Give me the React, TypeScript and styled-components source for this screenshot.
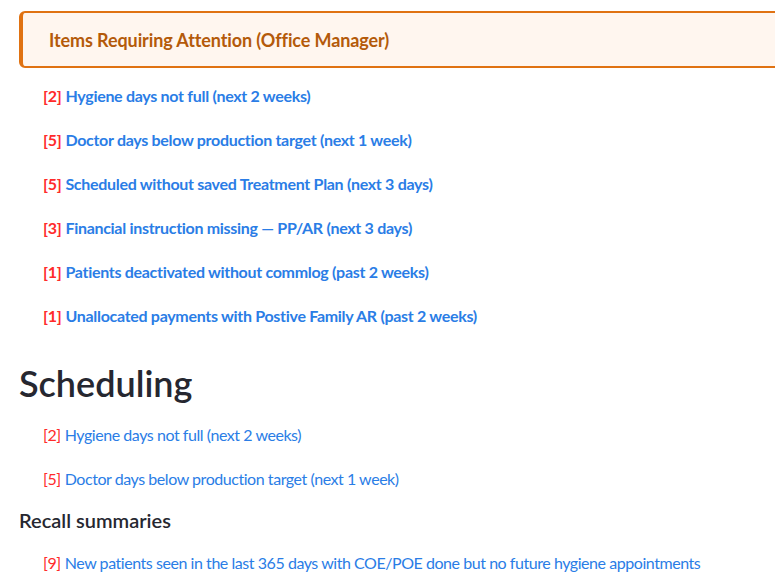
import React from 'react'
import styled, { createGlobalStyle } from 'styled-components';

const GlobalStyle = createGlobalStyle`
    body {
        margin: 0;
        background: #fff;
        font-family: "Lato", "Liberation Sans", sans-serif;
        color: #31333f;
    }
`;

const Page = styled.div`
    display: flex;
    flex-direction: column;
    padding: 11px 0 0 19px;
    overflow: hidden;
`;

const Callout = styled.div`
    display: flex;
    align-items: center;
    height: 57px;
    box-sizing: border-box;
    margin-right: -20px;
    padding-left: 26px;
    background: #fff6ef;
    border: 2px solid #e07212;
    border-left-width: 4px;
    border-radius: 6px;
    color: #b45a0a;
    font-size: 18px;
    font-weight: 700;
    letter-spacing: -0.1px;
`;

const List = styled.div`
    display: flex;
    flex-direction: column;
    margin-top: 5px;
`;

const Row = styled.div<{ $bold?: boolean }>`
    display: flex;
    align-items: center;
    height: 44px;
    padding-left: 24px;
    font-size: 16px;
    font-weight: ${p => (p.$bold ? 700 : 400)};
    letter-spacing: ${p => (p.$bold ? '-0.3px' : '-0.45px')};
    white-space: nowrap;
`;

const Count = styled.span`
    color: #ff2b2b;
    margin-right: 4px;
`;

const Link = styled.a`
    color: #2a7de6;
    text-decoration: none;
    cursor: pointer;
`;

const Heading = styled.h2`
    margin: 22px 0 5px;
    height: 48px;
    display: flex;
    align-items: center;
    font-size: 36px;
    font-weight: 600;
    color: #262730;
`;

const SubHeading = styled.h4`
    margin: 0;
    height: 40px;
    display: flex;
    align-items: center;
    font-size: 20px;
    font-weight: 600;
    color: #262730;
`;

type Item = { n: number; text: string };

const attention: Item[] = [
    { n: 2, text: 'Hygiene days not full (next 2 weeks)' },
    { n: 5, text: 'Doctor days below production target (next 1 week)' },
    { n: 5, text: 'Scheduled without saved Treatment Plan (next 3 days)' },
    { n: 3, text: 'Financial instruction missing — PP/AR (next 3 days)' },
    { n: 1, text: 'Patients deactivated without commlog (past 2 weeks)' },
    { n: 1, text: 'Unallocated payments with Postive Family AR (past 2 weeks)' },
];

const scheduling: Item[] = [
    { n: 2, text: 'Hygiene days not full (next 2 weeks)' },
    { n: 5, text: 'Doctor days below production target (next 1 week)' },
];

const recall: Item[] = [
    { n: 9, text: 'New patients seen in the last 365 days with COE/POE done but no future hygiene appointments' },
];

const ItemRow = ({ item, bold }: { item: Item; bold?: boolean }) => (
    <Row $bold={bold}>
        <Count>[{item.n}]</Count>
        <Link>{item.text}</Link>
    </Row>
);

const App = () => {
  return (
    <Page>
        <GlobalStyle />
        <Callout>Items Requiring Attention (Office Manager)</Callout>
        <List>
            {attention.map((it, i) => <ItemRow key={i} item={it} bold />)}
        </List>
        <Heading>Scheduling</Heading>
        {scheduling.map((it, i) => <ItemRow key={i} item={it} />)}
        <SubHeading>Recall summaries</SubHeading>
        {recall.map((it, i) => <ItemRow key={i} item={it} />)}
    </Page>
  )
}

export default App
